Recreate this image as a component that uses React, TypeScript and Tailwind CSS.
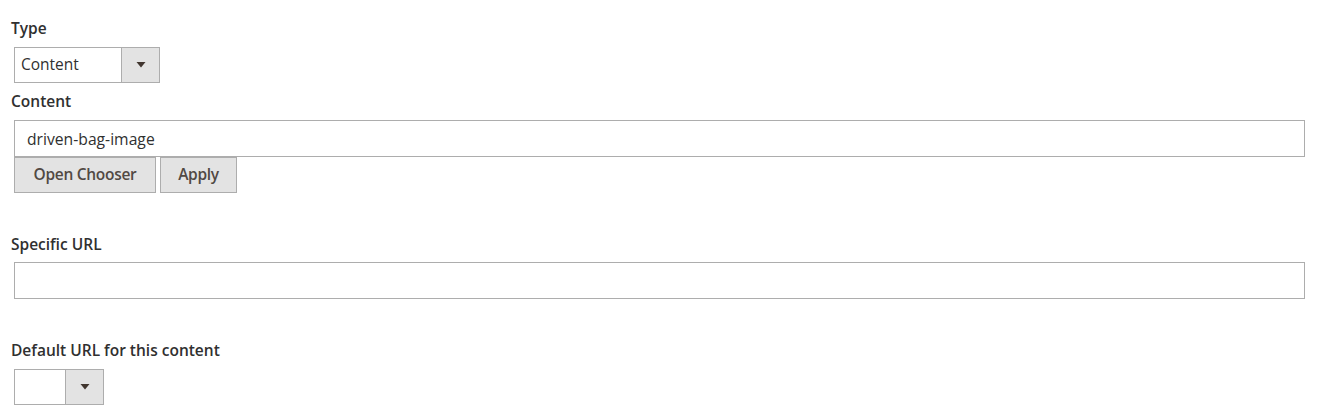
import { useState } from 'react';

function Arrow() {
  return (
    <svg width="10" height="6" viewBox="0 0 10 6" className="block">
      <path d="M0.5 0 L9.5 0 L5 5.5 Z" fill="#41362f" />
    </svg>
  );
}

function Select({ value, width }: { value: string; width: string }) {
  return (
    <div className={`flex h-[36px] ${width} border border-[#adadad] bg-white ml-[3px]`}>
      <div className="flex-1 flex items-center pl-[6px] text-[15.5px] text-[#303030]">{value}</div>
      <div className="w-[38px] flex items-center justify-center bg-[#e3e3e3] border-l border-[#adadad]">
        <Arrow />
      </div>
    </div>
  );
}

function Label({ children, mb }: { children: React.ReactNode; mb: string }) {
  return <div className={`text-[15.5px] leading-[20px] font-semibold text-[#303030] ${mb}`}>{children}</div>;
}

export default function App() {
  const [content, setContent] = useState('driven-bag-image');
  const [url, setUrl] = useState('');

  return (
    <div
      className="w-[1318px] h-[420px] bg-white pl-[11px] pr-[13px] pt-[18px]"
      style={{ fontFamily: '"Open Sans", "Liberation Sans", sans-serif' }}
    >
      <div className="mb-[8px]">
        <Label mb="mb-[9px]">Type</Label>
        <Select value="Content" width="w-[146px]" />
      </div>

      <div>
        <Label mb="mb-[9px]">Content</Label>
        <input
          value={content}
          onChange={e => setContent(e.target.value)}
          className="block w-[1291px] h-[37px] ml-[3px] border border-[#adadad] px-[12px] text-[15.7px] text-[#303030] outline-none"
        />
        <div className="flex gap-[4px] ml-[3px]">
          <button className="h-[36px] w-[142px] bg-[#e3e3e3] border border-[#adadad] text-[15.5px] font-semibold tracking-[-0.3px] text-[#514943]">
            Open Chooser
          </button>
          <button className="h-[36px] w-[77px] bg-[#e3e3e3] border border-[#adadad] text-[15.5px] font-semibold tracking-[-0.3px] text-[#514943]">
            Apply
          </button>
        </div>
      </div>

      <div className="mt-[41px]">
        <Label mb="mb-[8px]">Specific URL</Label>
        <input
          value={url}
          onChange={e => setUrl(e.target.value)}
          className="block w-[1291px] h-[37px] ml-[3px] border border-[#adadad] px-[12px] text-[15.7px] text-[#303030] outline-none"
        />
      </div>

      <div className="mt-[41px]">
        <Label mb="mb-[9px]">Default URL for this content</Label>
        <Select value="" width="w-[90px]" />
      </div>
    </div>
  );
}
